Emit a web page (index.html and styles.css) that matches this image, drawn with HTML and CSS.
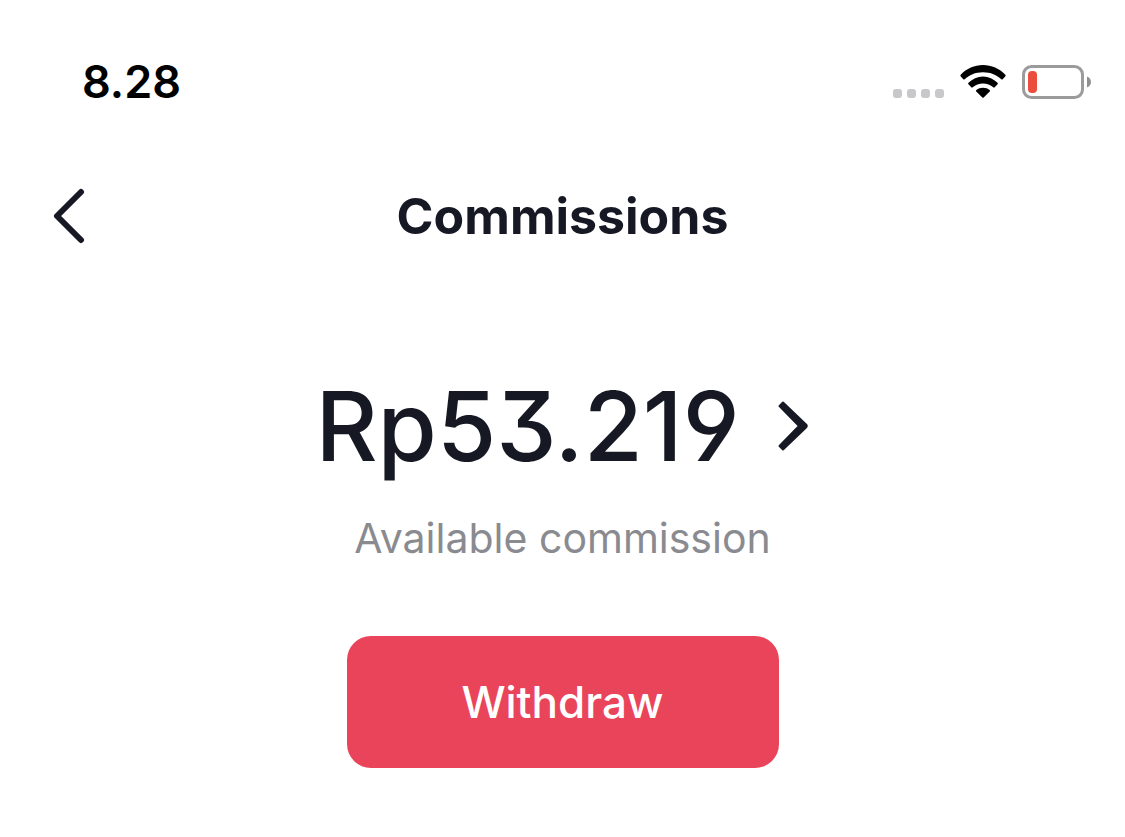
FILE: index.html
```html
<!DOCTYPE html>
<html lang="en">
<head>
<meta charset="utf-8">
<meta name="viewport" content="width=device-width, initial-scale=1">
<title>Commissions</title>
<link rel="stylesheet" href="styles.css">
</head>
<body>
<div class="status">
  <time class="clock">8.28</time>
  <div class="indicators">
    <svg class="signal" width="51" height="34" viewBox="0 0 51 34" fill="#c8c8ca" aria-hidden="true"><rect x="0" y="24" width="9" height="9" rx="3"/><rect x="14" y="24" width="9" height="9" rx="3"/><rect x="28" y="24" width="9" height="9" rx="3"/><rect x="42" y="24" width="9" height="9" rx="3"/></svg>
    <svg class="wifi" width="46" height="34" viewBox="0 0 46 34" aria-hidden="true"><path d="M23 7.200C31 7.200 36.800 10 41.300 14.200Q42 14.900 42.700 14.200L45.400 11.200Q46 10.400 45.300 9.700C39.500 3.500 31.500 0 23 0S6.500 3.500 .7 9.700Q0 10.400 .6 11.200L3.300 14.200Q4 14.900 4.700 14.200C9.200 10 15 7.200 23 7.200Z"/><path d="M23 18.600C27 18.600 30.500 20 33.300 22.300Q34 23 34.700 22.300L37.600 19.300Q38.300 18.500 37.500 17.800C33.500 14 28.700 11.600 23 11.600S12.500 14 8.500 17.800Q7.700 18.500 8.400 19.300L11.300 22.300Q12 23 12.700 22.300C15.500 20 19 18.600 23 18.600Z"/><path d="M23 22.800C25.700 22.800 27.700 23.600 29.600 25Q30.400 25.700 29.700 26.500L23.700 32.500Q23 33.200 22.300 32.500L16.300 26.500Q15.600 25.700 16.400 25C18.300 23.600 20.300 22.800 23 22.800Z"/></svg>
    <svg class="battery" width="70" height="34" viewBox="0 0 70 34" aria-hidden="true"><rect x="1.500" y="1.500" width="59" height="31" rx="8" fill="none" stroke="#9b9b9b" stroke-width="3"/><rect x="6" y="6" width="9" height="22" rx="4" fill="#eb4e3d"/><path d="M65 11.500C70.300 13.500 70.300 20.500 65 22.500Z" fill="#8f8f8f"/></svg>
  </div>
</div>
<header class="header">
  <button class="back" type="button" aria-label="Back"><svg width="34" height="56" viewBox="0 0 34 56" fill="none" stroke="#161823" stroke-width="6" stroke-linejoin="round" stroke-linecap="round"><path d="M29 4L5 28L29 52"/></svg></button>
  <h1 class="title">Commissions</h1>
</header>
<main class="summary">
  <a class="balance" href="#details"><span class="amount">Rp53.219</span><svg width="34" height="52" viewBox="0 0 34 52" fill="#161823" stroke="#161823" stroke-width="2" stroke-linejoin="round" aria-hidden="true"><path d="M7 2.500L30 24.500Q31.500 26 30 27.500L7 49.500L3.500 46L23 26L3.500 6Z"/></svg></a>
  <p class="caption">Available commission</p>
  <button class="withdraw" type="button">Withdraw</button>
</main>
</body>
</html>
```
FILE: styles.css
```css
* {
  box-sizing: border-box;
}

body {
  margin: 0;
  background: #fff;
  color: #161823;
  font-family: Inter, sans-serif;
}

.status {
  display: flex;
  align-items: center;
  justify-content: space-between;
  padding: 52px 33px 0 82px;
}

.clock {
  color: #000;
  font-size: 45px;
  font-weight: 600;
  line-height: 60px;
}

.indicators {
  display: flex;
  align-items: center;
  gap: 16px;
}

.header {
  display: grid;
  grid-template-columns: 34px 1fr 34px;
  align-items: center;
  margin-top: 68px;
  padding: 0 52px;
}

.back {
  display: flex;
  padding: 0;
  border: 0;
  background: none;
}

.title {
  margin: 0;
  text-align: center;
  font-size: 50px;
  font-weight: 700;
  line-height: 72px;
}

.summary {
  display: flex;
  flex-direction: column;
  align-items: center;
  padding-top: 110px;
}

.balance {
  display: flex;
  align-items: center;
  gap: 36px;
  color: inherit;
  text-decoration: none;
}

.amount {
  font-size: 96px;
  font-weight: 500;
  font-feature-settings: "ss01", "cv09";
  line-height: 128px;
}

.caption {
  margin: 20px 0 70px;
  color: #8a8b91;
  font-size: 41px;
  line-height: 56px;
}

.withdraw {
  width: 432px;
  height: 132px;
  border: 0;
  border-radius: 24px;
  background: #ea445a;
  color: #fff;
  font-family: inherit;
  font-size: 44px;
  font-weight: 500;
}
```
